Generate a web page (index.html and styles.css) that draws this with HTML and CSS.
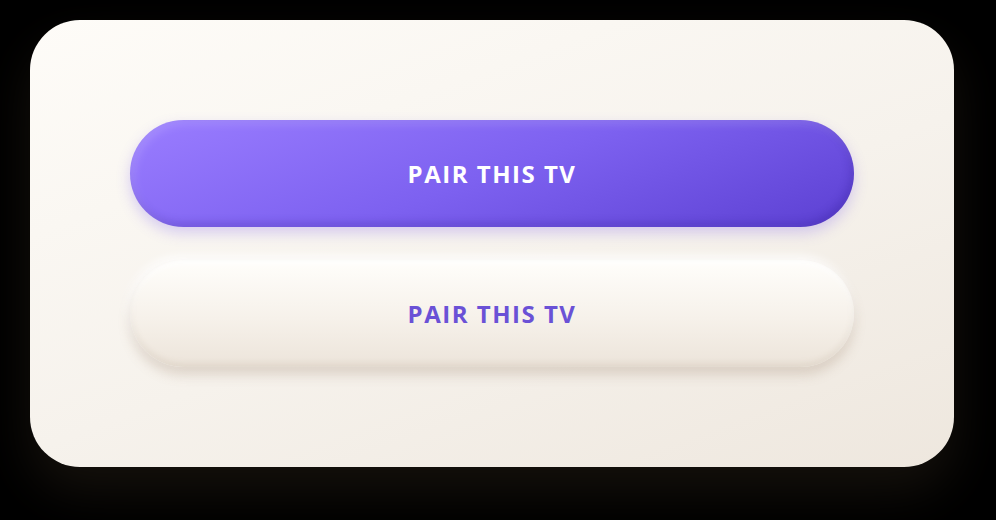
FILE: index.html
```html
<!DOCTYPE html>
<html>
<head>
<meta charset="utf-8">
<link rel="stylesheet" href="styles.css">
</head>
<body>
<div class="card">
  <button class="btn btn-primary">PAIR THIS TV</button>
  <button class="btn btn-soft">PAIR THIS TV</button>
</div>
</body>
</html>
```
FILE: styles.css
```css
html, body {
  margin: 0;
  background: #000;
}
body {
  width: 996px;
  height: 520px;
  padding: 20px 42px 0 30px;
  box-sizing: border-box;
  overflow: hidden;
}
.card {
  width: 924px;
  height: 447px;
  box-sizing: border-box;
  padding: 100px 100px;
  border-radius: 50px;
  background: linear-gradient(160deg, #fefcf8 0%, #f6f2ec 55%, #eee7de 100%);
  box-shadow: 0 24px 50px rgba(70, 55, 40, 0.3);
  display: flex;
  flex-direction: column;
  gap: 33px;
}
.btn {
  height: 107px;
  width: 100%;
  border: none;
  border-radius: 54px;
  font-family: "Open Sans", "Noto Sans", sans-serif;
  font-weight: 700;
  font-size: 24px;
  letter-spacing: 1.5px;
  padding: 0;
}
.btn-primary {
  color: #fff;
  background: linear-gradient(160deg, #9a7dff 0%, #7d61f0 50%, #5c40d2 100%);
  box-shadow: 0 6px 14px rgba(110, 80, 240, 0.25),
              inset 4px 4px 10px rgba(255, 255, 255, 0.15),
              inset -3px -4px 8px rgba(40, 20, 140, 0.25);
}
.btn-soft {
  color: #6a51d6;
  background: linear-gradient(180deg, #fffefb 0%, #f6f1ea 55%, #ece4da 100%);
  box-shadow: 0 8px 12px rgba(150, 125, 100, 0.25),
              -2px -4px 10px rgba(255, 255, 255, 0.9),
              inset 0 -3px 6px rgba(170, 150, 125, 0.2),
              inset 0 3px 6px rgba(255, 255, 255, 0.9);
}
```
